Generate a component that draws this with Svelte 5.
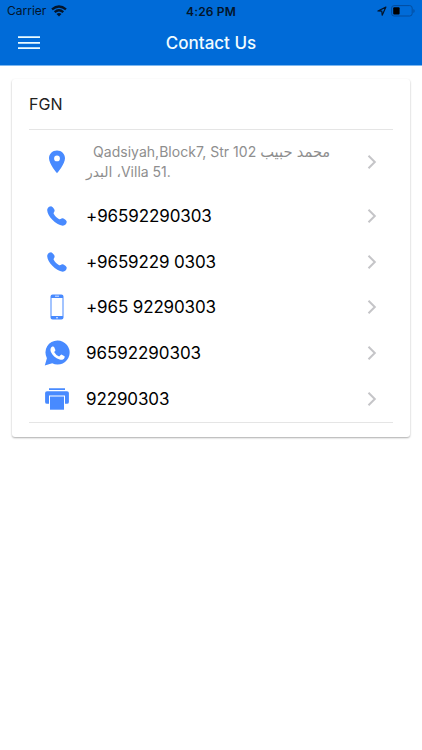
<script>
  const rows = [
    { icon: 'phone', text: '+96592290303', spacing: -0.1 },
    { icon: 'phone', text: '+9659229 0303', spacing: -0.14 },
    { icon: 'mobile', text: '+965 92290303', spacing: -0.14 },
    { icon: 'whatsapp', text: '96592290303', spacing: -0.06 },
    { icon: 'print', text: '92290303', spacing: -0.12 }
  ];
</script>

{#snippet chevron()}
  <svg class="chevron" width="10" height="16" viewBox="0 0 10 16"><path d="M1.5 1.8 7.8 8l-6.3 6.2" fill="none" stroke="#c5c5c8" stroke-width="2" /></svg>
{/snippet}

<div class="screen">
  <header>
    <div class="status">
      <div class="carrier">
        <span>Carrier</span>
        <svg width="16" height="12" viewBox="0 0 16 12" fill="none" stroke="#03152b" stroke-width="2.3">
          <path d="M1 4.4Q8-1.5 15 4.4M3.700 7.200Q8 3.400 12.300 7.200" />
          <path d="M5.500 9Q8 7 10.500 9L8 11.500Z" fill="#03152b" stroke="none" />
        </svg>
      </div>
      <span class="time">4:26 PM</span>
      <div class="power">
        <svg width="10" height="10" viewBox="0 0 10 10"><path d="M.9 5 8.900 1.100 5.200 9.200 4.800 5.200Z" fill="none" stroke="#03152b" stroke-width="1.200" stroke-linejoin="round" /></svg>
        <svg width="24" height="12" viewBox="0 0 24 12">
          <rect x=".6" y=".6" width="20.6" height="10.4" rx="2.5" fill="none" stroke="#034d9e" />
          <rect x="2.2" y="2.2" width="6.4" height="7.2" rx="1" fill="#000" />
          <path d="M22.400 4v4q1.200-.6 1.200-2t-1.200-2" fill="#034d9e" />
        </svg>
      </div>
    </div>
    <div class="toolbar">
      <svg class="menu" width="22" height="14" viewBox="0 0 22 14"><path d="M0 1.200h22M0 6.800h22M0 12.200h22" stroke="#e9fbff" stroke-width="1.800" /></svg>
      <h1>Contact Us</h1>
    </div>
  </header>

  <main>
    <h2>FGN</h2>
    <div class="list">
      <div class="row address">
        <div class="icon">
          <svg width="18" height="24" viewBox="0 0 18 24"><path fill="#488aff" fill-rule="evenodd" d="M9 .5C4.400.5 1 3.900 1 8.300 1 14 9 23.300 9 23.300S17 14 17 8.300C17 3.900 13.600.5 9 .5Zm0 5a2.900 2.900 0 1 1 0 5.800 2.900 2.900 0 0 1 0-5.800Z" /></svg>
        </div>
        <p>
          <span class="first">Qadsiyah,Block7, Str 102 <span class="arabic">محمد حبيب</span></span>
          <span class="second">البدر ،Villa 51.</span>
        </p>
        {@render chevron()}
      </div>
      {#each rows as row}
        <div class="row">
          <div class="icon">
            {#if row.icon === 'phone'}
              <svg width="20" height="20" viewBox="0 0 20 20"><path fill="#488aff" d="M.6 2.500C1.500 1 3 .2 4.500.4 6.700 1.600 8.200 4 7.400 5.500 6.700 6.700 6.200 7.100 7 8.200 8.200 10.100 9.900 11.800 11.800 13 12.900 13.700 13.400 13.200 14.600 12.500 16 11.700 18.400 13.300 19.600 15.300 20.100 17.200 18.300 19.300 15.800 19.800 8.600 18.900.4 10 .2 4.300.2 3.600.3 3 .6 2.500Z" /></svg>
            {:else if row.icon === 'mobile'}
              <svg width="14" height="26" viewBox="0 0 14 26">
                <path fill="#488aff" fill-rule="evenodd" d="M2.600.4h8.800q2.100 0 2.100 2.100v21q0 2.100-2.100 2.100H2.600Q.5 25.600.5 23.500v-21Q.5.400 2.600.400ZM1.500 3.900v18.200h11V3.900Z" />
                <path stroke="#fff" stroke-width=".8" d="M5 2.200h4" /><circle cx="7" cy="23.800" r=".8" fill="#fff" />
              </svg>
            {:else if row.icon === 'whatsapp'}
              <svg width="26" height="26" viewBox="0 0 26 26">
                <path fill="#488aff" d="M13.500.5A12 12 0 0 0 2.900 18.200L.8 25.400l7.400-2.200A12 12 0 1 0 13.500.5Z" />
                <path fill="#fff" d="M8.300 6.600q1.100-.5 1.800.3l1.300 3q.3.800-1.300 2.200 1.900 3.400 5 4.500l1.600-1.700q.5-.5 1.200-.1l2.600 1.500q.4.400 0 1.400c-.7 1.900-2.800 2.400-4.900 1.700-4.100-1.300-7.300-4.100-8.800-7.700-.9-2.200 0-4.300 1.500-5.100Z" />
              </svg>
            {:else}
              <svg width="24" height="22" viewBox="0 0 24 22" fill="#488aff">
                <path d="M4 .3h16v1.800H4ZM2 3.200h20q1.900 0 1.900 1.900v8.800q0 1.900-1.900 1.900h-2V7.400H4v8.400H2q-1.900 0-1.900-1.900V5.100Q.1 3.200 2 3.200Z" />
                <path d="M5 8.500h14v13.200H5Z" />
              </svg>
            {/if}
          </div>
          <span class="number" style:letter-spacing="{row.spacing}px">{row.text}</span>
          {@render chevron()}
        </div>
      {/each}
    </div>
  </main>
</div>

<style>
  :global(body) { background: #fff; }
  .screen {
    height: 750px;
    overflow: hidden;
    background: #fff;
    font-family: Inter, "Noto Sans", "DejaVu Sans", sans-serif;
  }
  svg { display: block; flex: none; }
  header { height: 65px; background: #006bd8; border-bottom: 1px solid #7db7ef; box-sizing: content-box; }
  .status {
    display: grid;
    grid-template-columns: 1fr auto 1fr;
    align-items: center;
    height: 22px;
    padding: 0 7px;
    color: #03152b;
    font-size: 12px;
  }
  .carrier { display: flex; align-items: center; gap: 5px; margin-top: -1px; }
  .time { font-weight: 600; letter-spacing: 0.15px; }
  .power { display: flex; justify-content: flex-end; align-items: center; gap: 4px; margin: -1px 0 0; }
  .toolbar {
    display: grid;
    grid-template-columns: 1fr auto 1fr;
    align-items: center;
    height: 42px;
    padding: 0 18px;
  }
  h1 { margin: 0; color: #f0fcff; font-size: 17px; font-weight: 500; letter-spacing: 0; }
  main {
    box-sizing: border-box;
    height: 358px;
    margin: 13px 12px 0;
    padding: 0 17px;
    background: #fff;
    border-radius: 3px;
    box-shadow: 0 1px 2px rgba(0, 0, 0, 0.33);
  }
  h2 { margin: 0; height: 50px; line-height: 51px; color: #222; font-size: 16px; font-weight: 400; }
  .list { border-top: 1px solid #e5e5e5; border-bottom: 1px solid #e5e5e5; }
  .row { display: flex; align-items: center; height: 45.75px; padding-right: 16px; }
  .address { height: 63px; }
  .icon { display: flex; flex: none; justify-content: center; width: 56px; margin-right: 1px; }
  .number { flex: 1; color: #000; font-size: 17px; white-space: nowrap; }
  p { display: flex; flex: 1; flex-direction: column; margin: 0; color: #8e8e8e; font-size: 14px; line-height: 20px; white-space: nowrap; }
  .first { padding-left: 7px; letter-spacing: 0.03px; }
  .arabic { font-size: 14.7px; line-height: 1; letter-spacing: 0; }
</style>
